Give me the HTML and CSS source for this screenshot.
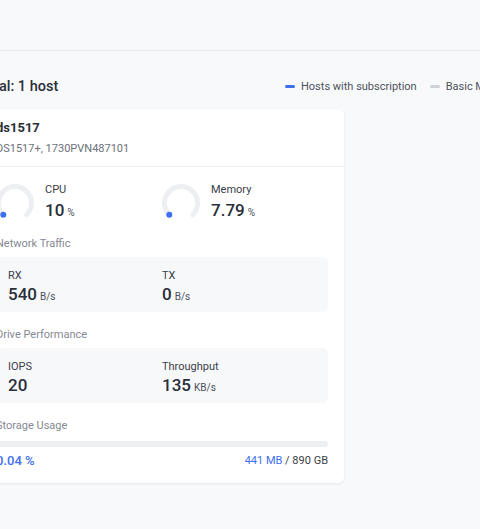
FILE: index.html
```html
<!DOCTYPE html>
<html>
<head>
<meta charset="utf-8">
<link rel="stylesheet" href="styles.css">
</head>
<body>
<div class="topbar"></div>
<main class="main">
  <div class="summary">
    <h2 class="total">Total: 1 host</h2>
    <div class="legend">
      <span class="legend-item"><i class="dash dash-blue"></i>Hosts with subscription</span>
      <span class="legend-item"><i class="dash dash-gray"></i>Basic Monitoring</span>
    </div>
  </div>
  <section class="card">
    <header class="card-head">
      <div class="host-name">ds1517</div>
      <div class="host-sub">DS1517+, 1730PVN487101</div>
    </header>
    <div class="card-body">
      <div class="gauges">
        <div class="gauge-item">
          <svg class="gauge" viewBox="0 0 40 40" width="40" height="40">
            <path d="M8.3 31.7 A16.5 16.5 0 1 1 31.7 31.7" fill="none" stroke="#eeeff2" stroke-width="5" stroke-linecap="round"/>
            <circle cx="8.3" cy="31.7" r="3" fill="#3e6ff0"/>
          </svg>
          <div class="gauge-text">
            <div class="label">CPU</div>
            <div class="value">10<span class="unit">%</span></div>
          </div>
        </div>
        <div class="gauge-item">
          <svg class="gauge" viewBox="0 0 40 40" width="40" height="40">
            <path d="M8.3 31.7 A16.5 16.5 0 1 1 31.7 31.7" fill="none" stroke="#eeeff2" stroke-width="5" stroke-linecap="round"/>
            <circle cx="8.3" cy="31.7" r="3" fill="#3e6ff0"/>
          </svg>
          <div class="gauge-text">
            <div class="label">Memory</div>
            <div class="value">7.79<span class="unit">%</span></div>
          </div>
        </div>
      </div>

      <div class="section-title first">Network Traffic</div>
      <div class="stat-box">
        <div class="stat"><div class="label">RX</div><div class="value">540<span class="unit">B/s</span></div></div>
        <div class="stat"><div class="label">TX</div><div class="value">0<span class="unit">B/s</span></div></div>
      </div>

      <div class="section-title">Drive Performance</div>
      <div class="stat-box">
        <div class="stat"><div class="label">IOPS</div><div class="value">20</div></div>
        <div class="stat"><div class="label">Throughput</div><div class="value">135<span class="unit">KB/s</span></div></div>
      </div>

      <div class="section-title storage">Storage Usage</div>
      <div class="bar"><div class="bar-fill" style="width:0.04%"></div></div>
      <div class="usage">
        <span class="usage-pct">0.04 %</span>
        <span class="usage-amt"><span class="used">441 MB</span> / 890 GB</span>
      </div>
    </div>
  </section>
</main>
</body>
</html>
```

FILE: styles.css
```css
html, body {
  margin: 0;
  padding: 0;
}
body {
  background: #f8f9fb;
  font-family: Roboto, "Liberation Sans", sans-serif;
  color: #2c303a;
  width: 480px;
  height: 529px;
  overflow: hidden;
}
.topbar {
  height: 50px;
  border-bottom: 1px solid #e9eaee;
}
.main {
  margin-left: -22px;
  width: 600px;
}
.summary {
  display: flex;
  align-items: center;
  justify-content: space-between;
  height: 30px;
  margin-top: 20px;
  white-space: nowrap;
}
.total {
  margin: 0;
  font-size: 14.5px;
  font-weight: 500;
  color: #2a2e38;
}
.legend {
  display: flex;
  gap: 13px;
  font-size: 11px;
  color: #4d525c;
  width: 293px;
}
.legend-item {
  display: flex;
  align-items: center;
  gap: 6px;
}
.dash {
  display: inline-block;
  width: 10px;
  height: 3px;
  border-radius: 2px;
}
.dash-blue { background: #3e6ff0; }
.dash-gray { background: #cfd2d8; }

.card {
  margin-top: 8px;
  width: 364px;
  margin-left: 2px;
  background: #fff;
  border-radius: 6px;
  box-shadow: 0 1px 3px rgba(20, 30, 50, 0.08);
}
.card-head {
  padding: 10px 16px 10px;
  border-bottom: 1px solid #eceef1;
}
.host-name {
  font-size: 13px;
  font-weight: 700;
  color: #2a2e38;
  line-height: 18px;
}
.host-sub {
  margin-top: 4px;
  font-size: 11px;
  color: #6d717a;
  line-height: 15px;
}
.card-body {
  padding: 16px 16px 14px;
}
.gauges {
  display: grid;
  grid-template-columns: 1fr 1fr;
}
.gauge-item {
  display: flex;
  align-items: flex-start;
  gap: 10px;
}
.gauge {
  display: block;
  margin-left: -1px;
}
.label {
  font-size: 11px;
  color: #3a3e48;
  line-height: 14px;
}
.value {
  font-size: 17px;
  font-weight: 500;
  color: #2a2e38;
  line-height: 20px;
  height: 20px;
  margin-top: 3px;
}
.unit {
  font-size: 10px;
  font-weight: 400;
  color: #4b4f59;
  margin-left: 3px;
  line-height: 1;
}
.section-title {
  font-size: 11px;
  color: #858993;
  line-height: 14px;
  margin-top: 16px;
  margin-bottom: 6px;
}
.section-title.first {
  margin-top: 14px;
}
.section-title.storage {
  margin-top: 16px;
  margin-bottom: 8px;
}
.stat-box {
  display: grid;
  grid-template-columns: 1fr 1fr;
  background: #f7f8fa;
  border-radius: 6px;
  padding: 12px 12px 8px;
}
.stat .value {
  margin-top: 1px;
}
.bar {
  height: 6px;
  background: #eeeff2;
  border-radius: 3px;
  overflow: hidden;
}
.bar-fill {
  height: 100%;
  background: #3e6ff0;
}
.usage {
  display: flex;
  justify-content: space-between;
  align-items: center;
  margin-top: 6px;
  line-height: 16px;
}
.usage-pct {
  font-size: 13px;
  font-weight: 500;
  color: #3e6ff0;
}
.usage-amt {
  font-size: 11px;
  color: #3a3e48;
}
.used {
  color: #3e6ff0;
}
```
